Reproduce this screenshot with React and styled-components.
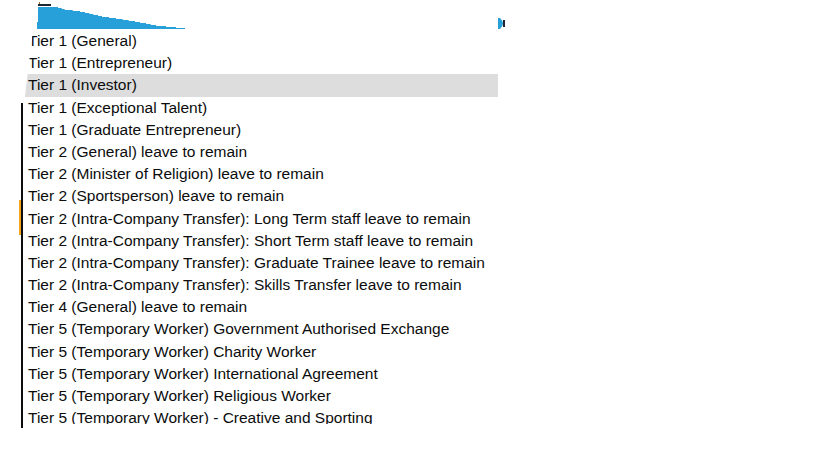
import React from 'react'
import styled, { createGlobalStyle } from 'styled-components'

const options = [
  'Tier 1 (General)',
  'Tier 1 (Entrepreneur)',
  'Tier 1 (Investor)',
  'Tier 1 (Exceptional Talent)',
  'Tier 1 (Graduate Entrepreneur)',
  'Tier 2 (General) leave to remain',
  'Tier 2 (Minister of Religion) leave to remain',
  'Tier 2 (Sportsperson) leave to remain',
  'Tier 2 (Intra-Company Transfer): Long Term staff leave to remain',
  'Tier 2 (Intra-Company Transfer): Short Term staff leave to remain',
  'Tier 2 (Intra-Company Transfer): Graduate Trainee leave to remain',
  'Tier 2 (Intra-Company Transfer): Skills Transfer leave to remain',
  'Tier 4 (General) leave to remain',
  'Tier 5 (Temporary Worker) Government Authorised Exchange',
  'Tier 5 (Temporary Worker) Charity Worker',
  'Tier 5 (Temporary Worker) International Agreement',
  'Tier 5 (Temporary Worker) Religious Worker',
  'Tier 5 (Temporary Worker) - Creative and Sporting',
]

// stepped progress shape across the header strip
const steps = [
  [58, 8], [61.7, 9], [64.7, 10], [72.7, 11], [80, 12], [85, 13], [89.3, 14],
  [93.3, 15], [98, 16], [102, 17], [109, 18], [116, 19], [122.7, 20], [128.7, 21],
  [135, 22], [140, 23], [146, 24], [150.7, 25], [156, 26], [166, 27], [176, 28], [185, 28],
]

const stepPath = () => {
  let d = 'M37 29 L37 22 L38 22 L38 7 L58 7'
  let prevY = 7
  steps.forEach(([x, y]) => {
    d += ` L${x} ${prevY} L${x} ${y}`
    prevY = y
  })
  return d + ' L185 29 Z'
}

export default function App() {
  return (
    <>
      <GlobalStyle />
      <Page>
        <Header>
          <svg width="520" height="30" viewBox="0 0 520 30">
            <path d={stepPath()} fill="#279fd9" />
            <rect x="38" y="4" width="13" height="2" fill="#1d2630" />
            <rect x="39" y="2" width="1" height="2" fill="#a0662a" />
            <path d="M498 18 L500 18 Q503 21 503 23.5 Q503 26 500 29 L498 29 Z" fill="#279fd9" />
            <rect x="503" y="20" width="2" height="7" fill="#1d2630" />
          </svg>
        </Header>
        <Field>
          <Marker />
        </Field>
        <Listbox role="listbox">
          {options.map((label, i) => (
            <Option key={label} $active={i === 2} role="option">
              {label}
            </Option>
          ))}
        </Listbox>
      </Page>
    </>
  )
}

const GlobalStyle = createGlobalStyle`
  body {
    margin: 0;
    padding: 0;
    background: #fff;
    font-family: 'Liberation Sans', Arial, sans-serif;
    color: #0b0c0c;
  }
`

const Page = styled.div`
  position: relative;
  width: 819px;
  height: 460px;
  overflow: hidden;
`

const Header = styled.div`
  height: 30px;
  line-height: 0;
  > svg { display: block; }
`

const Field = styled.div`
  position: relative;
  margin: 73px 0 0 21px;
  width: 0;
  height: 325px;
  border-left: 2px solid #0b0c0c;
`

const Marker = styled.span`
  position: absolute;
  left: -4px;
  top: 97px;
  width: 2px;
  height: 35px;
  background: #f4a41c;
`

const Listbox = styled.ul`
  position: absolute;
  top: 30px;
  left: 25px;
  width: 473px;
  height: 394px;
  margin: 0;
  padding: 0;
  list-style: none;
  overflow: hidden;
  background: #fff;
  clip-path: polygon(8px 0, 100% 0, 100% 100%, 0 100%, 0 66px);
`

const Option = styled.li`
  height: 22.2px;
  line-height: 21px;
  padding-left: 3px;
  font-size: 15.5px;
  white-space: nowrap;
  background: ${p => (p.$active ? '#dddddd' : 'transparent')};
`
